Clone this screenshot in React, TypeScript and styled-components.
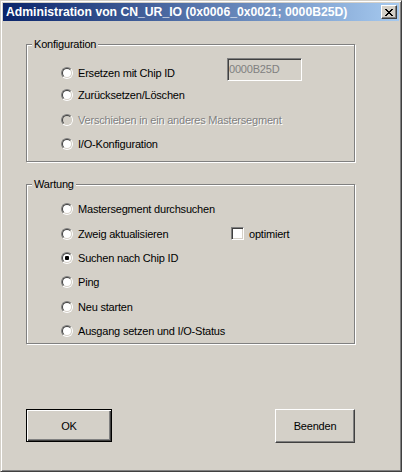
import React from 'react';
import styled, { createGlobalStyle } from 'styled-components';

const Global = createGlobalStyle`
  html, body { margin: 0; padding: 0; background: #d4d0c8; }
  body {
    font-family: "Liberation Sans", Arial, sans-serif;
    font-size: 11px;
    letter-spacing: -0.2px;
    color: #000;
  }
`;

const Window = styled.div`
  width: 402px;
  height: 472px;
  box-sizing: border-box;
  background: #d4d0c8;
  border: 1px solid;
  border-color: #d4d0c8 #404040 #404040 #d4d0c8;
  box-shadow: inset 1px 1px 0 #fff, inset -1px -1px 0 #808080;
  padding: 2px;
  display: flex;
  flex-direction: column;
`;

const TitleBar = styled.div`
  height: 18px;
  flex: none;
  display: flex;
  align-items: center;
  padding: 0 2px 0 3px;
  background: linear-gradient(to right, #0a246a, #a6caf0);
`;

const TitleText = styled.span`
  font-family: "Liberation Sans", Arial, sans-serif;
  font-weight: bold;
  font-size: 12.2px;
  letter-spacing: 0;
  line-height: 18px;
  color: #fff;
  white-space: nowrap;
`;

const CloseButton = styled.div`
  margin-left: auto;
  width: 16px;
  height: 14px;
  box-sizing: border-box;
  background: #d4d0c8;
  border: 1px solid;
  border-color: #fff #404040 #404040 #fff;
  box-shadow: inset -1px -1px 0 #808080;
  display: flex;
  align-items: center;
  justify-content: center;
  padding-right: 1px;
`;

const Client = styled.div`
  display: flex;
  flex-direction: column;
  padding-left: 23px;
`;

const Group = styled.div<{ $h: number; $mt: number }>`
  position: relative;
  box-sizing: border-box;
  width: 329px;
  height: ${p => p.$h}px;
  margin-top: ${p => p.$mt}px;
  border: 1px solid #808080;
  box-shadow: inset 1px 1px 0 #fff, 1px 1px 0 #fff;
  padding-left: 34px;
`;

const GroupBody = styled.div<{ $pt: number }>`
  display: flex;
  flex-direction: column;
  gap: 12.4px;
  padding-top: ${p => p.$pt}px;
`;

const Legend = styled.span`
  position: absolute;
  top: -7px;
  left: 5px;
  padding: 0 2px;
  line-height: 12px;
  background: #d4d0c8;
`;

const Row = styled.div`
  height: 12px;
  display: grid;
  grid-template-columns: 166px auto;
  align-items: center;
`;

const Option = styled.label<{ $disabled?: boolean }>`
  display: flex;
  align-items: center;
  gap: 5px;
  white-space: nowrap;
  color: ${p => (p.$disabled ? '#808080' : '#000')};
  text-shadow: ${p => (p.$disabled ? '1px 1px 0 #fff' : 'none')};
`;

const RadioOuter = styled.span`
  width: 12px;
  height: 12px;
  box-sizing: border-box;
  border-radius: 50%;
  border: 1px solid;
  border-color: #808080 #fff #fff #808080;
  flex: none;
  display: flex;
`;

const RadioInner = styled.span<{ $disabled?: boolean }>`
  flex: 1;
  border-radius: 50%;
  border: 1px solid;
  border-color: #404040 #d4d0c8 #d4d0c8 #404040;
  background: ${p => (p.$disabled ? '#d4d0c8' : '#fff')};
  display: flex;
  align-items: center;
  justify-content: center;
`;

const Dot = styled.span`
  width: 4px;
  height: 4px;
  border-radius: 1px;
  background: #000;
`;

const ReadField = styled.input`
  align-self: start;
  margin: -7px 0 0 0;
  width: 75px;
  height: 23px;
  box-sizing: border-box;
  border: 1px solid;
  border-color: #808080 #fff #fff #808080;
  box-shadow: inset 1px 1px 0 #404040, inset -1px -1px 0 #d4d0c8;
  background: #d4d0c8;
  color: #808080;
  font-family: "Liberation Sans", Arial, sans-serif;
  font-size: 11px;
  letter-spacing: -0.2px;
  padding: 0 0 2px 1px;
  outline: none;
`;

const CheckOption = styled.label`
  margin-left: 4px;
  display: flex;
  align-items: center;
  gap: 5px;
  white-space: nowrap;
`;

const CheckBox = styled.span`
  width: 13px;
  height: 13px;
  box-sizing: border-box;
  border: 1px solid;
  border-color: #808080 #fff #fff #808080;
  box-shadow: inset 1px 1px 0 #404040, inset -1px -1px 0 #d4d0c8;
  background: #fff;
  flex: none;
`;

const ButtonRow = styled.div`
  width: 329px;
  margin-top: 65px;
  display: flex;
  justify-content: space-between;
  align-items: flex-start;
`;

const Button = styled.button<{ $default?: boolean; $w: number; $h: number }>`
  width: ${p => p.$w}px;
  height: ${p => p.$h}px;
  box-sizing: border-box;
  background: #d4d0c8;
  font-family: "Liberation Sans", Arial, sans-serif;
  font-size: 11px;
  letter-spacing: -0.2px;
  color: #000;
  padding: 0;
  border: 1px solid;
  border-color: ${p => (p.$default ? '#000' : '#fff #404040 #404040 #fff')};
  box-shadow: ${p =>
    p.$default
      ? 'inset 1px 1px 0 #fff, inset -1px -1px 0 #404040, inset -2px -2px 0 #808080'
      : 'inset -1px -1px 0 #808080'};
`;

const Radio: React.FC<{ checked?: boolean; disabled?: boolean }> = ({ checked, disabled }) => (
  <RadioOuter>
    <RadioInner $disabled={disabled}>{checked && <Dot />}</RadioInner>
  </RadioOuter>
);

const CloseGlyph = () => {
  const rows = ['11000011', '01100110', '00111100', '00011000', '00111100', '01100110', '11000011'];
  return (
    <svg width="8" height="7" viewBox="0 0 8 7" shapeRendering="crispEdges">
      {rows.flatMap((r, y) =>
        r.split('').map((c, x) => (c === '1' ? <rect key={`${x}-${y}`} x={x} y={y} width="1" height="1" fill="#000" /> : null))
      )}
    </svg>
  );
};

export default function App() {
  return (
    <>
      <Global />
      <Window>
        <TitleBar>
          <TitleText>Administration von CN_UR_IO (0x0006_0x0021; 0000B25D)</TitleText>
          <CloseButton>
            <CloseGlyph />
          </CloseButton>
        </TitleBar>
        <Client>
          <Group $h={118} $mt={23}>
            <Legend>Konfiguration</Legend>
            <GroupBody $pt={20}>
              <Row>
                <Option>
                  <Radio />
                  Ersetzen mit Chip ID
                </Option>
                <ReadField readOnly value="0000B25D" />
              </Row>
              <Row>
                <Option>
                  <Radio />
                  Zurücksetzen/Löschen
                </Option>
              </Row>
              <Row>
                <Option $disabled>
                  <Radio disabled />
                  Verschieben in ein anderes Mastersegment
                </Option>
              </Row>
              <Row>
                <Option>
                  <Radio />
                  I/O-Konfiguration
                </Option>
              </Row>
            </GroupBody>
          </Group>
          <Group $h={160} $mt={22}>
            <Legend>Wartung</Legend>
            <GroupBody $pt={18}>
              <Row>
                <Option>
                  <Radio />
                  Mastersegment durchsuchen
                </Option>
              </Row>
              <Row>
                <Option>
                  <Radio />
                  Zweig aktualisieren
                </Option>
                <CheckOption>
                  <CheckBox />
                  optimiert
                </CheckOption>
              </Row>
              <Row>
                <Option>
                  <Radio checked />
                  Suchen nach Chip ID
                </Option>
              </Row>
              <Row>
                <Option>
                  <Radio />
                  Ping
                </Option>
              </Row>
              <Row>
                <Option>
                  <Radio />
                  Neu starten
                </Option>
              </Row>
              <Row>
                <Option>
                  <Radio />
                  Ausgang setzen und I/O-Status
                </Option>
              </Row>
            </GroupBody>
          </Group>
          <ButtonRow>
            <Button $default $w={86} $h={33}>OK</Button>
            <Button $w={80} $h={34}>Beenden</Button>
          </ButtonRow>
        </Client>
      </Window>
    </>
  );
}
